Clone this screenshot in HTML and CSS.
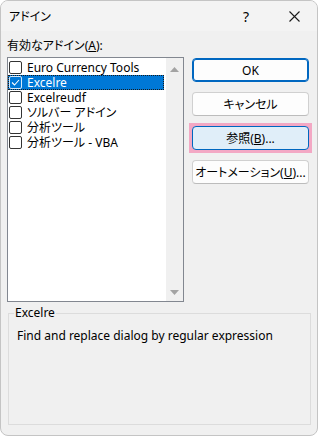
FILE: index.html
```html
<!DOCTYPE html>
<html lang="ja">
<head>
    <meta charset="UTF-8">
    <title>アドイン</title>
    <link rel="stylesheet" href="styles.css">
</head>
<body>
    <div class="dialog">
        <div class="titlebar">
            <span class="title">アドイン</span>
            <span class="help">?</span>
            <span class="close">
                <svg width="11" height="11" viewBox="0 0 11 11"><path d="M0.5 0.5 L10.5 10.5 M10.5 0.5 L0.5 10.5" stroke="#1a1a1a" stroke-width="1.1" fill="none"/></svg>
            </span>
        </div>
        <div class="content">
            <div class="main">
                <div class="left">
                    <div class="label">有効なアドイン(<u>A</u>):</div>
                    <div class="listbox">
                        <ul class="items">
                            <li class="item"><span class="box"></span><span class="name">Euro Currency Tools</span></li>
                            <li class="item selected"><span class="box"><svg width="11" height="11" viewBox="0 0 11 11"><path d="M2 5.5 L4.5 8 L9 3" stroke="#fff" stroke-width="1.1" fill="none"/></svg></span><span class="name">Excelre</span></li>
                            <li class="item"><span class="box"></span><span class="name">Excelreudf</span></li>
                            <li class="item"><span class="box"></span><span class="name">ソルバー アドイン</span></li>
                            <li class="item"><span class="box"></span><span class="name">分析ツール</span></li>
                            <li class="item"><span class="box"></span><span class="name">分析ツール - VBA</span></li>
                        </ul>
                        <div class="scrollbar">
                            <svg width="9" height="5" viewBox="0 0 9 5"><path d="M0 5 L4.5 0 L9 5 Z" fill="#a3a3a3"/></svg>
                            <svg width="9" height="5" viewBox="0 0 9 5"><path d="M0 0 L4.5 5 L9 0 Z" fill="#a3a3a3"/></svg>
                        </div>
                    </div>
                </div>
                <div class="buttons">
                    <div class="btn default"><span>OK</span></div>
                    <div class="btn"><span>キャンセル</span></div>
                    <div class="highlight">
                        <div class="btn focused"><span>参照(<u>B</u>)...</span></div>
                    </div>
                    <div class="btn"><span>オートメーション(<u>U</u>)...</span></div>
                </div>
            </div>
            <fieldset class="group">
                <legend>Excelre</legend>
                <p class="desc">Find and replace dialog by regular expression</p>
            </fieldset>
        </div>
    </div>
</body>
</html>
```

FILE: styles.css
```css
* {
    box-sizing: border-box;
}
body {
    margin: 0;
    background-color: #ffffff;
    font-family: "Noto Sans", "Noto Sans CJK JP", sans-serif;
    font-size: 12px;
    font-feature-settings: "palt";
    color: #000;
}
.dialog {
    width: 318px;
    height: 436px;
    background-color: #f0f0f0;
    border: 1px solid #c4c4c4;
    border-radius: 8px;
    overflow: hidden;
}
.titlebar {
    height: 30px;
    display: flex;
    align-items: center;
    padding-left: 8px;
    background-color: #f3f3f3;
}
.title {
    flex: 1;
    font-size: 12px;
}
.help {
    width: 46px;
    text-align: center;
    font-size: 14px;
    margin-right: 2px;
}
.close {
    width: 46px;
    display: flex;
    justify-content: center;
}
.content {
    padding: 7px 0 0 6px;
}
.main {
    display: flex;
    gap: 8px;
}
.left {
    width: 177px;
}
.label {
    line-height: 16px;
    height: 16px;
}
.listbox {
    margin-top: 3px;
    height: 245px;
    border: 1px solid #828790;
    background-color: #fff;
    display: flex;
}
.items {
    list-style: none;
    margin: 0 2px 0 0;
    padding: 2px 0 0 0;
    flex: 1;
}
.item {
    height: 15px;
    display: flex;
    align-items: center;
    white-space: nowrap;
    padding-left: 1px;
}
.name {
    line-height: 14px;
}
.box {
    width: 13px;
    height: 13px;
    border: 1px solid #333;
    border-radius: 2px;
    background-color: #fff;
    margin-right: 5px;
    display: flex;
    align-items: center;
    justify-content: center;
}
.item.selected {
    background-color: #0078d7;
    color: #fff;
    outline: 1px dotted #1a1a1a;
    outline-offset: -1px;
}
.item.selected .box {
    background-color: #0078d7;
    border-color: #d6e8f7;
}
.scrollbar {
    width: 17px;
    background-color: #f0f0f0;
    display: flex;
    flex-direction: column;
    justify-content: space-between;
    align-items: center;
    padding: 9px 0 6px 0;
}
.buttons {
    margin-top: 20px;
    display: flex;
    flex-direction: column;
    gap: 10px;
}
.btn {
    width: 117px;
    height: 24px;
    border: 1px solid #d0d0d0;
    border-bottom-color: #bcbcbc;
    border-radius: 4px;
    background-color: #fdfdfd;
    display: flex;
    align-items: center;
    justify-content: center;
    font-size: 12px;
    white-space: nowrap;
}
.btn.default {
    border: 1px solid #0067c0;
    box-shadow: inset 0 0 0 1px #0067c0;
}
.highlight {
    margin: -3px;
    padding: 3px;
    background-color: #f3a8c4;
}
.btn.focused {
    background-color: #e0eef9;
    border-color: #0067c0;
}
.group {
    margin: 3px 0 0 1px;
    width: 303px;
    height: 120px;
    border: 1px solid #dcdcdc;
    padding: 0 5px;
}
.group legend {
    padding: 0 1px;
    line-height: 16px;
}
.desc {
    margin: 7px 0 0 3px;
    line-height: 16px;
}
```
